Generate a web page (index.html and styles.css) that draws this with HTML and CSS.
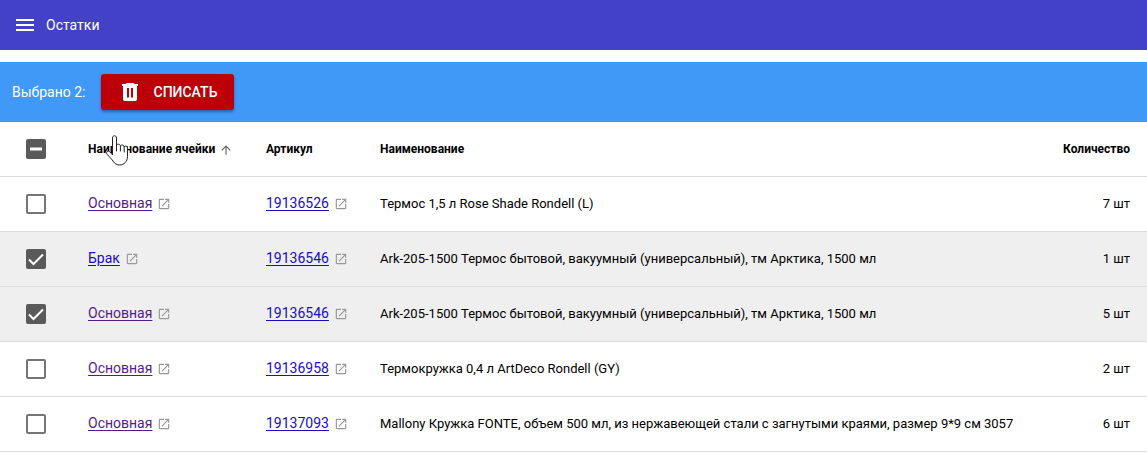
FILE: index.html
```
<!DOCTYPE html>
<html lang="ru">
<head>
<meta charset="UTF-8">
<meta name="viewport" content="width=device-width, initial-scale=1.0">
<title>Остатки</title>
<link rel="stylesheet" href="styles.css">
</head>
<body>
    <!-- shared icons -->
    <svg class="sprite" aria-hidden="true">
        <symbol id="icon-open" viewBox="0 0 24 24">
            <path d="M19 19H5V5h7V3H5c-1.11 0-2 .9-2 2v14c0 1.1.89 2 2 2h14c1.1 0 2-.9 2-2v-7h-2v7zM14 3v2h3.59l-9.83 9.83 1.41 1.41L19 6.41V10h2V3h-7z"/>
        </symbol>
    </svg>

    <header class="topbar">
        <button type="button" class="menu-btn" aria-label="Меню">
            <svg viewBox="0 0 24 24"><path d="M3 18h18v-2H3v2zm0-5h18v-2H3v2zm0-7v2h18V6H3z"/></svg>
        </button>
        <h1 class="title">Остатки</h1>
    </header>

    <div class="selection">
        <span>Выбрано 2:</span>
        <button type="button" class="writeoff-btn">
            <svg viewBox="0 0 24 24"><path fill-rule="evenodd" d="M8.500 3h7l1 1H20v2H4V4h3.500zM5 6h14v13.300c0 1-.8 1.700-1.800 1.700H6.800c-1 0-1.800-.7-1.800-1.700zM9 8v9.500h2V8zM13 8v9.500h2V8z"/></svg>
            Списать
        </button>
    </div>

    <table class="stock">
        <thead>
            <tr>
                <th class="col-check"><input type="checkbox" id="checkAll" aria-label="Выбрать все"></th>
                <th class="col-cell sorted">Наименование ячейки
                    <svg class="sort-icon" viewBox="0 0 24 24"><path d="M4 12l1.410 1.410L11 7.830V20h2V7.830l5.580 5.590L20 12l-8-8-8 8z"/></svg>
                    <svg class="pointer" viewBox="0 0 24 32" aria-hidden="true">
                        <path d="M7.500 19.500V3c0-3 4-3 4 0v7.500c.5-2 3.700-1.600 3.900.4.8-1.600 3.600-1 3.800.9 1-1.400 3.300-.6 3.300 1.200v8.500c0 5-3.500 8.500-8 8.500-3.500 0-5.500-2-7.200-5L1.800 19c-1-2 1-4 3-2.200z"/>
                        <path d="M11.500 10v6M15.400 11v5M19.200 12v5"/>
                    </svg>
                </th>
                <th class="col-article">Артикул</th>
                <th>Наименование</th>
                <th class="col-count">Количество</th>
            </tr>
        </thead>
        <tbody>
            <tr>
                <td class="col-check"><input type="checkbox" aria-label="Выбрать 19136526"></td>
                <td class="link"><a href="#" class="seen">Основная</a><svg class="open"><use href="#icon-open"/></svg></td>
                <td class="link"><a href="#">19136526</a><svg class="open"><use href="#icon-open"/></svg></td>
                <td>Термос 1,5 л Rose Shade Rondell (L)</td>
                <td class="col-count">7 шт</td>
            </tr>
            <tr class="selected">
                <td class="col-check"><input type="checkbox" aria-label="Выбрать 19136546, Брак" checked></td>
                <td class="link"><a href="#">Брак</a><svg class="open"><use href="#icon-open"/></svg></td>
                <td class="link"><a href="#">19136546</a><svg class="open"><use href="#icon-open"/></svg></td>
                <td>Ark-205-1500 Термос бытовой, вакуумный (универсальный), тм Арктика, 1500 мл</td>
                <td class="col-count">1 шт</td>
            </tr>
            <tr class="selected">
                <td class="col-check"><input type="checkbox" aria-label="Выбрать 19136546, Основная" checked></td>
                <td class="link"><a href="#" class="seen">Основная</a><svg class="open"><use href="#icon-open"/></svg></td>
                <td class="link"><a href="#">19136546</a><svg class="open"><use href="#icon-open"/></svg></td>
                <td>Ark-205-1500 Термос бытовой, вакуумный (универсальный), тм Арктика, 1500 мл</td>
                <td class="col-count">5 шт</td>
            </tr>
            <tr>
                <td class="col-check"><input type="checkbox" aria-label="Выбрать 19136958"></td>
                <td class="link"><a href="#" class="seen">Основная</a><svg class="open"><use href="#icon-open"/></svg></td>
                <td class="link"><a href="#">19136958</a><svg class="open"><use href="#icon-open"/></svg></td>
                <td>Термокружка 0,4 л ArtDeco Rondell (GY)</td>
                <td class="col-count">2 шт</td>
            </tr>
            <tr>
                <td class="col-check"><input type="checkbox" aria-label="Выбрать 19137093"></td>
                <td class="link"><a href="#" class="seen">Основная</a><svg class="open"><use href="#icon-open"/></svg></td>
                <td class="link"><a href="#">19137093</a><svg class="open"><use href="#icon-open"/></svg></td>
                <td>Mallony Кружка FONTE, объем 500 мл, из нержавеющей стали с загнутыми краями, размер 9*9 см 3057</td>
                <td class="col-count">6 шт</td>
            </tr>
        </tbody>
    </table>

    <script>
        // only part of the rows is selected
        document.getElementById('checkAll').indeterminate = true;
    </script>
</body>
</html>
```
FILE: styles.css
```
* {
    box-sizing: border-box;
}
body {
    margin: 0;
    background-color: #fff;
    color: #000;
    font-family: Roboto, "Liberation Sans", sans-serif;
    font-size: 14px;
    line-height: 20px;
}
.sprite {
    display: none;
}
.topbar {
    display: flex;
    align-items: center;
    gap: 9px;
    height: 50px;
    padding: 0 13px;
    background-color: #4441c9;
    color: #fff;
}
.menu-btn {
    width: 24px;
    height: 24px;
    padding: 0;
    border: none;
    background: none;
    cursor: pointer;
}
.menu-btn svg {
    display: block;
    fill: #fff;
}
.title {
    margin: 0;
    font-size: 14px;
    font-weight: 400;
}
.selection {
    display: flex;
    align-items: center;
    gap: 15px;
    height: 60px;
    margin-top: 12px;
    padding: 0 12px;
    background-color: #4098f7;
    color: #fff;
}
.writeoff-btn {
    display: flex;
    align-items: center;
    gap: 12px;
    height: 36px;
    padding: 0 17px;
    border: none;
    border-radius: 3px;
    background-color: #bb0009;
    box-shadow: 0 2px 3px rgba(0, 0, 0, 0.35);
    color: #fff;
    font-family: inherit;
    font-size: 14px;
    font-weight: 500;
    text-transform: uppercase;
    cursor: pointer;
}
.writeoff-btn svg {
    width: 24px;
    height: 24px;
    fill: #fff;
}
.stock {
    width: 100%;
    border-collapse: separate;
    border-spacing: 0;
}
.stock th,
.stock td {
    height: 55px;
    padding: 0;
    border-bottom: 1px solid #ddd;
    font-size: 13px;
    text-align: left;
    white-space: nowrap;
}
.stock th {
    font-size: 12px;
    font-weight: 700;
}
.stock .selected td {
    background-color: #efefef;
}
.stock .col-check {
    width: 88px;
    padding-left: 26px;
}
.col-cell {
    width: 178px;
}
.col-article {
    width: 114px;
}
.stock .col-count {
    padding-right: 17px;
    text-align: right;
}
.stock .link {
    padding-bottom: 2px;
}
.stock a {
    color: #1a0dc4;
    font-size: 14px;
    text-underline-offset: 2px;
}
.stock a.seen {
    color: #551a8b;
}
.open {
    width: 14px;
    height: 14px;
    margin-left: 5px;
    fill: #999;
    vertical-align: -3px;
}
.sorted {
    position: relative;
}
.sort-icon {
    width: 14px;
    height: 14px;
    margin-left: 1px;
    fill: #666;
    vertical-align: -4px;
}
.pointer {
    position: absolute;
    top: 13px;
    left: 17px;
    width: 24px;
    height: 32px;
    fill: #fff;
    stroke: #222;
    stroke-linecap: round;
    stroke-linejoin: round;
}
input[type="checkbox"] {
    display: block;
    appearance: none;
    width: 20px;
    height: 20px;
    margin: 0;
    border: 2px solid #757575;
    border-radius: 2px;
    background: center / 20px 20px no-repeat;
    cursor: pointer;
}
input[type="checkbox"]:checked,
input[type="checkbox"]:indeterminate {
    border-color: #5a5a5a;
    background-color: #5a5a5a;
}
input[type="checkbox"]:checked {
    background-image: url("data:image/svg+xml,%3Csvg xmlns='http://www.w3.org/2000/svg' viewBox='0 0 20 20'%3E%3Cpath d='M3 10.500l4.500 4.500L17 5.500' fill='none' stroke='white' stroke-width='2'/%3E%3C/svg%3E");
}
input[type="checkbox"]:indeterminate {
    background-image: url("data:image/svg+xml,%3Csvg xmlns='http://www.w3.org/2000/svg' viewBox='0 0 20 20'%3E%3Cpath d='M4 10h12' stroke='white' stroke-width='3'/%3E%3C/svg%3E");
}
```
